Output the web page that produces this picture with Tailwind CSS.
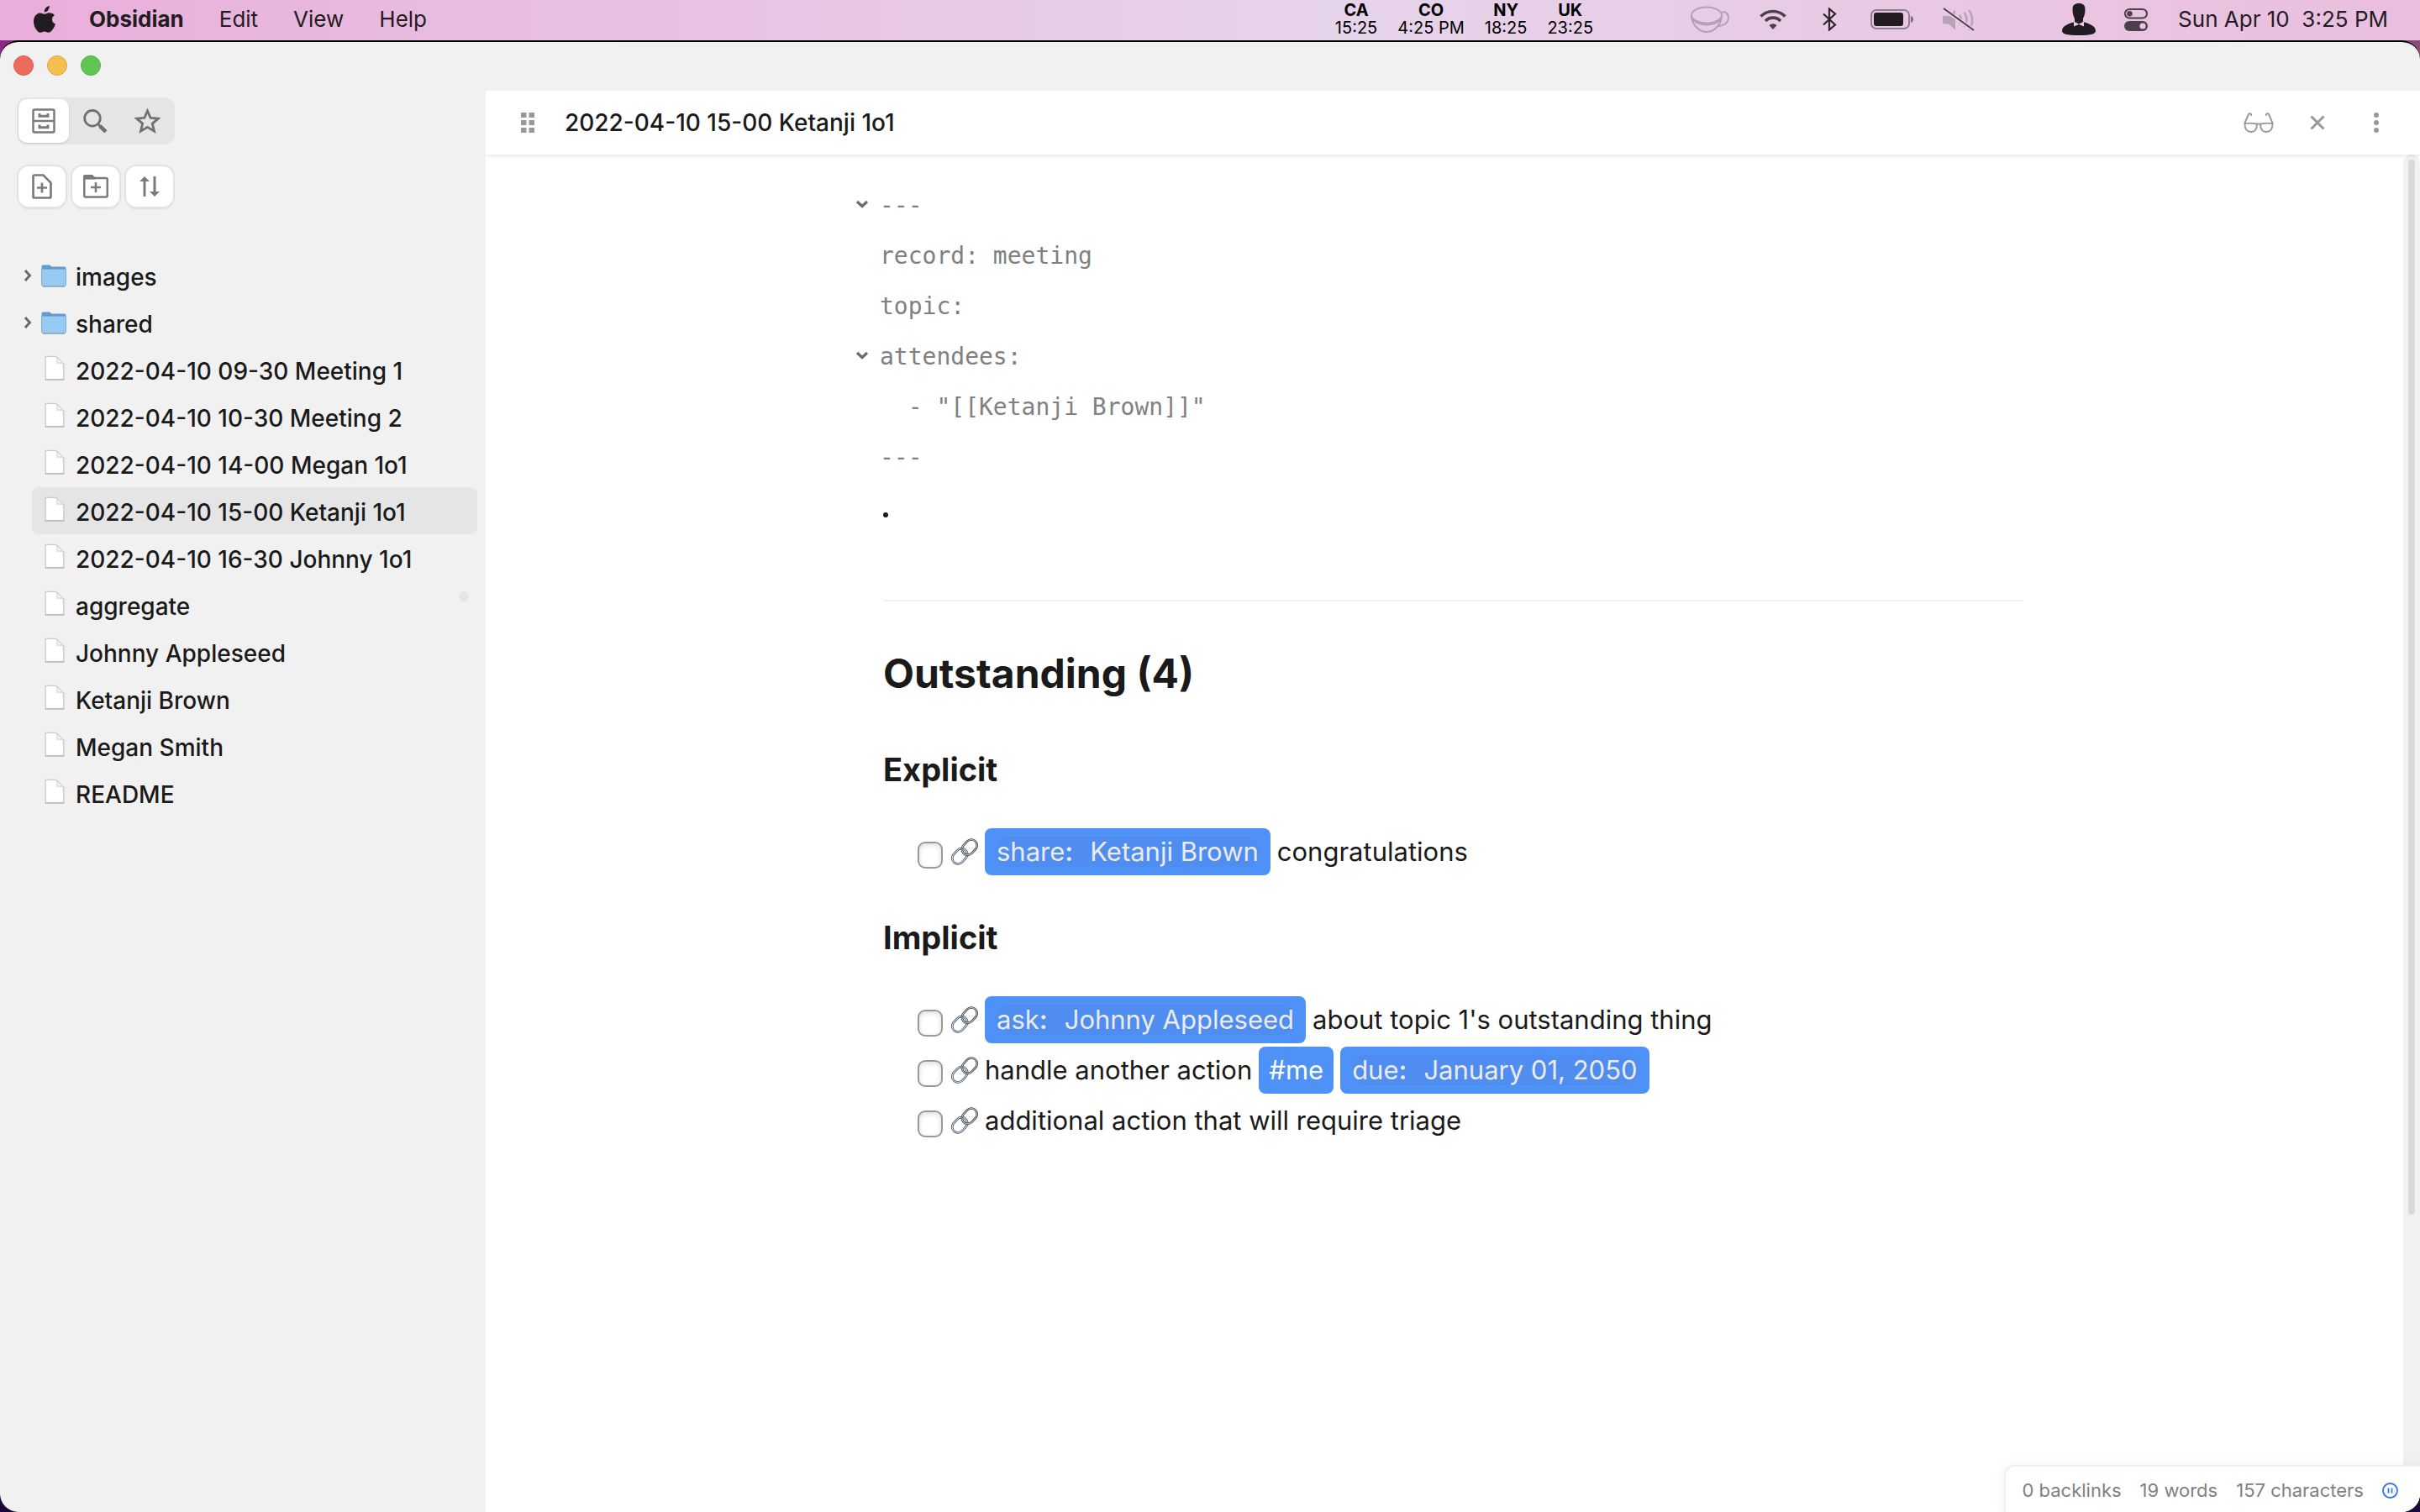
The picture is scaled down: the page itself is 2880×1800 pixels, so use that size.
<!DOCTYPE html>
<html lang="en">
<head>
<meta charset="utf-8">
<meta name="viewport" content="width=device-width, initial-scale=1">
<title>2022-04-10 15-00 Ketanji 1o1 - Obsidian</title>
<script src="https://cdn.jsdelivr.net/npm/@tailwindcss/browser@4"></script>
</head>
<body class="flex h-screen flex-col overflow-hidden bg-linear-to-r from-[#8a2a84] to-[#8c4a78] font-['Inter',sans-serif] text-[#1a1a1a]">

<!-- Shared symbols -->
<svg class="hidden" aria-hidden="true">
  <symbol id="i-file" viewBox="0 0 26 32">
    <path d="M1.500 1.500h13.500l9.500 9.500v19.500h-23z" fill="#fff" stroke="#c9c9c9" stroke-width="1.500"/>
    <path d="M15 1.500c1.500 3 1 5.500 0.500 8.500 3-0.500 6-0.500 9 1z" fill="#f1f1f1" stroke="#d0d0d0" stroke-width="1"/>
    <path d="M1 30.800h24" stroke="#b3b3b3" stroke-width="1.500"/>
  </symbol>
  <symbol id="i-folder" viewBox="0 0 30 27">
    <path d="M0.500 2.500a2 2 0 0 1 2-2h7.500l2.500 2h15a2 2 0 0 1 2 2v19a2 2 0 0 1-2 2h-25a2 2 0 0 1-2-2z" fill="#5f9ad3"/>
    <path d="M0.500 5.500h29v18a2 2 0 0 1-2 2h-25a2 2 0 0 1-2-2z" fill="#98cbf2" stroke="#7fb0da" stroke-width="1"/>
    <path d="M2 26h26" stroke="#8fa3b3" stroke-width="1.500"/>
  </symbol>
  <symbol id="i-chevron" viewBox="0 0 10 16">
    <path d="M2 2l5.500 6-5.500 6" fill="none" stroke="#6b6b6b" stroke-width="3"/>
  </symbol>
  <symbol id="i-fold" viewBox="0 0 16 12">
    <path d="M2 3l6 5.500 6-5.500" fill="none" stroke="#6b6b6b" stroke-width="3.200"/>
  </symbol>
  <symbol id="i-link" viewBox="0 0 32 32">
    <g fill="none">
      <rect x="-10" y="-6.800" width="20" height="13.600" rx="6.800" transform="translate(10.200 21.300) rotate(-47)" stroke="#454a54" stroke-width="2.600"/>
      <rect x="-10" y="-6.800" width="20" height="13.600" rx="6.800" transform="translate(10.200 21.300) rotate(-47)" stroke="#c3d8ea" stroke-width="1.200"/>
      <rect x="-10" y="-6.800" width="20" height="13.600" rx="6.800" transform="translate(21.800 10.700) rotate(-47)" stroke="#4a4146" stroke-width="2.600"/>
      <rect x="-10" y="-6.800" width="20" height="13.600" rx="6.800" transform="translate(21.800 10.700) rotate(-47)" stroke="#bccbdc" stroke-width="1"/>
    </g>
  </symbol>
</svg>

<!-- Menu bar -->
<header class="flex h-12 shrink-0 items-center bg-linear-to-r from-[#e9aeda] via-[#e6d4ea] via-55% to-[#eabede] pb-0.5 pl-10 pr-[38px] text-[26px] leading-8 text-[#221c22]">
  <button aria-label="Apple menu" class="mr-10">
    <svg class="h-8 w-[26px]" viewBox="0 0 26 32" fill="#221c22"><path d="M18.800 0c.2 2-.6 3.900-1.700 5.200-1.200 1.400-2.800 2.300-4.300 2.200-.2-1.900.7-3.900 1.800-5.100C15.700 1 17.400.1 18.800 0zM25 10.900c-1.800 1.100-3 2.800-3 5.200 0 2.800 1.600 4.800 4 5.700-.6 1.800-1.500 3.600-2.600 5.200-1.600 2.300-3.200 4.600-5.600 4.700-2 0-2.800-1.300-4.900-1.300s-3 1.300-4.900 1.300c-2.200.1-3.800-2-5.300-4.300C-.4 23-.7 16.400 1.300 12.700c1.400-2.600 3.900-4.300 6.500-4.300 2.200 0 3.600 1.300 5.300 1.300 1.600 0 2.900-1.400 5.600-1.400 2.300 0 4.700 1 6.300 2.600z"/></svg>
  </button>
  <nav class="flex items-center gap-[42px]" aria-label="Application menu">
    <button class="font-bold">Obsidian</button>
    <button>Edit</button>
    <button>View</button>
    <button>Help</button>
  </nav>
  <div class="ml-auto flex items-center gap-6 text-center text-xl leading-[21px] text-black">
    <div><div class="font-bold">CA</div><div>15:25</div></div>
    <div><div class="font-bold">CO</div><div>4:25 PM</div></div>
    <div><div class="font-bold">NY</div><div>18:25</div></div>
    <div><div class="font-bold">UK</div><div>23:25</div></div>
  </div>
  <div class="ml-29 flex items-center">
    <svg class="h-8 w-[46px]" viewBox="0 0 46 32" fill="none" stroke="#b3a0b5" stroke-width="2"><ellipse cx="19" cy="11" rx="18" ry="9.500"/><path d="M1 11c0 10 8 20 18 20s18-10 18-20M36 8c5-2 9 1 9 6 0 6-6 10-12 10M2 15c3 5 9 7.500 17 7.500S33 20 36 15"/></svg>
    <svg class="ml-9 h-6 w-8" viewBox="0 0 32 24" fill="none" stroke="#4a3f4a" stroke-width="3.600"><path d="M1.500 8.500a20.500 20.500 0 0 1 29 0"/><path d="M7 14a12.500 12.500 0 0 1 18 0"/><path d="M16 24l-4.500-4.800a6.300 6.300 0 0 1 9 0z" fill="#4a3f4a" stroke="none"/></svg>
    <svg class="ml-[43px] h-7 w-[17px]" viewBox="0 0 17 28" fill="none" stroke="#2b252b" stroke-width="2.200"><path d="M1 7.500l14 13-7 6v-25l7 6-14 13"/></svg>
    <svg class="ml-10 h-6 w-[52px]" viewBox="0 0 52 24"><rect x="1" y="1" width="45" height="22" rx="6" fill="none" stroke="#8f7f91" stroke-width="2"/><rect x="4" y="4" width="35" height="16" rx="3" fill="#221c22"/><path d="M48 8c4 1 4 7 0 8z" fill="#7b6d7d"/></svg>
    <svg class="ml-[34px] h-7 w-[38px]" viewBox="0 0 38 28" fill="none"><path d="M0 10h7l8-7.500v24l-8-7H1.500a1.500 1.500 0 0 1-1.500-1.500z" fill="#b7a2b9"/><path d="M20 9c2 3 2 7 0 10M25.500 6c4 5 4 12 0 17M31 3c5.500 7 5.500 17 0 24" stroke="#b7a2b9" stroke-width="2.500"/><path d="M0 1l37 26" stroke="#e8cfe6" stroke-width="5"/><path d="M1 1l36 26" stroke="#4a3f4a" stroke-width="2"/></svg>
    <svg class="ml-26 h-[38px] w-10" viewBox="0 0 40 38" fill="#221c22"><path d="M12.500 7C12.500 2 15 0 20 0s7.500 2 7.500 7c0 5-1 8-2.500 11v4c6 2 15 4 15 11 0 3-5 5-20 5S0 36 0 33c0-7 9-9 15-11v-4c-1.500-3-2.500-6-2.500-11z"/><path d="M14 21.500l6 3 6-3v6l-6-2.500-6 2.500z" fill="#ecc9e3"/></svg>
    <svg class="ml-[34px] h-[27px] w-7" viewBox="0 0 28 27"><rect x="1" y="1" width="26" height="10.500" rx="5.200" fill="none" stroke="#4a3f4a" stroke-width="2"/><circle cx="6.500" cy="6.200" r="3.200" fill="#4a3f4a"/><rect y="15" width="28" height="12" rx="6" fill="#4a3f4a"/><circle cx="22" cy="21" r="3.600" fill="#ecc6e2"/></svg>
    <time class="ml-9 whitespace-pre" datetime="2022-04-10T15:25">Sun Apr 10  3:25 PM</time>
  </div>
</header>

<!-- App window -->
<div class="min-h-0 flex-1 bg-linear-to-b from-transparent from-50% to-[#1a0838] to-50%">
<div class="relative flex h-full overflow-hidden rounded-[22px] border-t-2 border-black bg-[#f1f1f1]">

  <!-- Sidebar -->
  <aside class="flex w-[578px] shrink-0 flex-col">
    <div class="flex gap-4 pl-4 pt-4">
      <button aria-label="Close window" class="size-6 rounded-full border border-[#dd5a4e] bg-[#ed6a5e]"></button>
      <button aria-label="Minimize window" class="size-6 rounded-full border border-[#dfa340] bg-[#f5bf4f]"></button>
      <button aria-label="Zoom window" class="size-6 rounded-full border border-[#52ab41] bg-[#61c554]"></button>
    </div>

    <div class="ml-5 mt-[26px] flex w-[188px] rounded-xl bg-[#e5e5e5] p-0.5 text-[#707070]">
      <button aria-label="File explorer" class="flex h-[52px] w-15 items-center justify-center rounded-[10px] bg-white text-[#7b7b7b] shadow-sm">
        <svg class="h-[30px] w-7" viewBox="0 0 28 30" fill="none" stroke="currentColor" stroke-width="2.500"><rect x="1.500" y="1.500" width="25" height="27" rx="1.500"/><path d="M1.500 15h25"/><path d="M9 6v3.200h10V6M9 19.500v3.200h10v-3.200" stroke-width="3"/></svg>
      </button>
      <button aria-label="Search" class="flex h-[52px] w-[62px] items-center justify-center">
        <svg class="h-7 w-[29px]" viewBox="0 0 29 28" fill="none" stroke="currentColor" stroke-width="2.800"><circle cx="11" cy="10.800" r="9.300"/><path d="M17.500 17.500l3 3"/><path d="M19.800 20l7.200 6.800" stroke-width="4.500"/></svg>
      </button>
      <button aria-label="Starred" class="flex h-[52px] w-[62px] items-center justify-center">
        <svg class="size-[31px]" viewBox="0 0 31 31" fill="none" stroke="currentColor" stroke-width="2.800"><path d="M15.500 3l3.600 8.300 9.200.8-7 6 2.200 9-8-4.800-8 4.800 2.200-9-7-6 9.200-.8z"/></svg>
      </button>
    </div>

    <div class="ml-[22px] mt-[26px] flex gap-2 text-[#7b7b7b]">
      <button aria-label="New note" class="flex h-12 w-14 items-center justify-center rounded-xl bg-white shadow-[0_0_0_2px_#e2e2e2,0_3px_2px_#dcdcdc]">
        <svg class="h-[30px] w-6" viewBox="0 0 24 30" fill="none" stroke="currentColor" stroke-width="2.700"><path d="M3 1.500h10.500l9 9V27a1.500 1.500 0 0 1-1.500 1.500H3A1.500 1.500 0 0 1 1.500 27V3A1.500 1.500 0 0 1 3 1.500zM12 10.500v12M6 16.500h12"/></svg>
      </button>
      <button aria-label="New folder" class="flex h-12 w-14 items-center justify-center rounded-xl bg-white shadow-[0_0_0_2px_#e2e2e2,0_3px_2px_#dcdcdc]">
        <svg class="h-7 w-[30px]" viewBox="0 0 30 28" fill="none" stroke="currentColor" stroke-width="2.500"><path d="M1.300 4h26a1.500 1.500 0 0 1 1.500 1.500v19.500a1.500 1.500 0 0 1-1.500 1.500h-24.500A1.500 1.500 0 0 1 1.300 25z"/><path d="M0 4V2a2 2 0 0 1 2-2h9l4 4v1.500H1z" fill="currentColor" stroke="none"/><path d="M15 9v12M9 15h12"/></svg>
      </button>
      <button aria-label="Change sort order" class="flex h-12 w-14 items-center justify-center rounded-xl bg-white shadow-[0_0_0_2px_#e2e2e2,0_3px_2px_#dcdcdc]">
        <svg class="size-6" viewBox="0 0 24 24"><path d="M6 4v20M18 0v20" stroke="currentColor" stroke-width="3"/><path d="M0 6l6-6 6 6zM12 18l6 6 6-6z" fill="currentColor"/></svg>
      </button>
    </div>

    <ul class="mt-[54px] pl-5 pr-2.5 text-[28px] font-medium leading-[52px]">
      <li class="flex items-center">
        <svg class="ml-2 h-4 w-2.5"><use href="#i-chevron"/></svg>
        <button class="flex h-14 flex-1 items-center gap-[11px] rounded-lg pl-[11px]"><svg class="h-[27px] w-[30px]"><use href="#i-folder"/></svg><span class="pt-1">images</span></button>
      </li>
      <li class="flex items-center">
        <svg class="ml-2 h-4 w-2.5"><use href="#i-chevron"/></svg>
        <button class="flex h-14 flex-1 items-center gap-[11px] rounded-lg pl-[11px]"><svg class="h-[27px] w-[30px]"><use href="#i-folder"/></svg><span class="pt-1">shared</span></button>
      </li>
      <li class="pl-[18px]"><a href="#" class="flex h-14 items-center gap-2.5 rounded-lg pl-3"><svg class="mb-1 h-[30px] w-[30px]"><use href="#i-file"/></svg><span class="pt-1">2022-04-10 09-30 Meeting 1</span></a></li>
      <li class="pl-[18px]"><a href="#" class="flex h-14 items-center gap-2.5 rounded-lg pl-3"><svg class="mb-1 h-[30px] w-[30px]"><use href="#i-file"/></svg><span class="pt-1">2022-04-10 10-30 Meeting 2</span></a></li>
      <li class="pl-[18px]"><a href="#" class="flex h-14 items-center gap-2.5 rounded-lg pl-3"><svg class="mb-1 h-[30px] w-[30px]"><use href="#i-file"/></svg><span class="pt-1">2022-04-10 14-00 Megan 1o1</span></a></li>
      <li class="pl-[18px]"><a href="#" aria-current="page" class="flex h-14 items-center gap-2.5 rounded-lg bg-[#e5e5e5] pl-3"><svg class="mb-1 h-[30px] w-[30px]"><use href="#i-file"/></svg><span class="pt-1">2022-04-10 15-00 Ketanji 1o1</span></a></li>
      <li class="pl-[18px]"><a href="#" class="flex h-14 items-center gap-2.5 rounded-lg pl-3"><svg class="mb-1 h-[30px] w-[30px]"><use href="#i-file"/></svg><span class="pt-1">2022-04-10 16-30 Johnny 1o1</span></a></li>
      <li class="pl-[18px]"><a href="#" class="flex h-14 items-center gap-2.5 rounded-lg pl-3 pr-2.5"><svg class="mb-1 h-[30px] w-[30px]"><use href="#i-file"/></svg><span class="pt-1">aggregate</span><span class="ml-auto mt-3 size-3 self-start rounded-full bg-[#e5e5e5]"></span></a></li>
      <li class="pl-[18px]"><a href="#" class="flex h-14 items-center gap-2.5 rounded-lg pl-3"><svg class="mb-1 h-[30px] w-[30px]"><use href="#i-file"/></svg><span class="pt-1">Johnny Appleseed</span></a></li>
      <li class="pl-[18px]"><a href="#" class="flex h-14 items-center gap-2.5 rounded-lg pl-3"><svg class="mb-1 h-[30px] w-[30px]"><use href="#i-file"/></svg><span class="pt-1">Ketanji Brown</span></a></li>
      <li class="pl-[18px]"><a href="#" class="flex h-14 items-center gap-2.5 rounded-lg pl-3"><svg class="mb-1 h-[30px] w-[30px]"><use href="#i-file"/></svg><span class="pt-1">Megan Smith</span></a></li>
      <li class="pl-[18px]"><a href="#" class="flex h-14 items-center gap-2.5 rounded-lg pl-3"><svg class="mb-1 h-[30px] w-[30px]"><use href="#i-file"/></svg><span class="pt-1">README</span></a></li>
    </ul>
  </aside>

  <!-- Note pane -->
  <main class="mt-14 flex min-w-0 flex-1 flex-col overflow-hidden border-t-2 border-[#f1f1f1] bg-white">
    <div class="z-10 flex h-19 shrink-0 items-center bg-white pl-[15px] pr-[17px] text-[#999999] shadow-[0_1px_5px_rgba(0,0,0,0.13)]">
      <button aria-label="Drag pane" class="flex w-[70px] justify-center">
        <svg class="h-6 w-4" viewBox="0 0 16 24" fill="currentColor"><path d="M0 0h6.500v6H0zM9.500 0H16v6H9.500zM0 9h6.500v6H0zM9.500 9H16v6H9.500zM0 18h6.500v6H0zM9.500 18H16v6H9.500z"/></svg>
      </button>
      <h1 class="ml-[9px] text-[28px] font-medium leading-9 text-[#1a1a1a]">2022-04-10 15-00 Ketanji 1o1</h1>
      <button aria-label="Toggle reading view" class="ml-auto flex w-[70px] justify-center">
        <svg class="h-6 w-9" viewBox="0 0 36 24" fill="none" stroke="currentColor" stroke-width="1.900"><path d="M9.500 4c-.5-3-2.500-4-3.500-2L1 13.500M26.500 4c.5-3 2.500-4 3.500-2L35 13.500M0.500 13.500c5-1.500 10-1 15 0h5c5-1 10-1.500 15 0M1.500 13.500c0 6 2 9.500 7.500 9.500s7-4 7-9.500M34.500 13.500c0 6-2 9.500-7.500 9.500s-7-4-7-9.500"/></svg>
      </button>
      <button aria-label="Close pane" class="flex w-[70px] justify-center">
        <svg class="size-[18px]" viewBox="0 0 18 18"><path d="M1.500 1.500l15 15M16.500 1.500l-15 15" stroke="currentColor" stroke-width="3"/></svg>
      </button>
      <button aria-label="More options" class="flex w-[70px] justify-center">
        <svg class="h-6 w-2" viewBox="0 0 8 24" fill="currentColor"><circle cx="4" cy="3" r="3"/><circle cx="4" cy="12" r="3"/><circle cx="4" cy="21" r="3"/></svg>
      </button>
    </div>

    <div class="flex min-h-0 flex-1">
      <div class="min-w-0 flex-1 pl-5 pt-[31px]">
        <div class="mx-auto max-w-[1364px]">
          <div class="font-['DejaVu_Sans_Mono',monospace] text-[28px] leading-[60px] text-[#808080]">
            <div class="relative"><button aria-label="Fold front matter" class="absolute -left-[29px] top-0 flex h-14 items-center"><svg class="h-3 w-4"><use href="#i-fold"/></svg></button>---</div>
            <div>record: meeting</div>
            <div>topic:</div>
            <div class="relative"><button aria-label="Fold attendees" class="absolute -left-[29px] top-0 flex h-14 items-center"><svg class="h-3 w-4"><use href="#i-fold"/></svg></button>attendees:</div>
            <div class="whitespace-pre">  - "[[Ketanji Brown]]"</div>
            <div>---</div>
          </div>

          <div class="pl-1 pr-[3px]">
            <div class="mt-[35px]"><span class="block size-1.5 rounded-full bg-[#1a1a1a]"></span></div>
            <hr class="mt-[98px] border-t-2 border-[#f1f1f1]">

            <h2 class="mt-[54px] text-5xl font-bold leading-16">Outstanding (4)</h2>

            <h3 class="mt-[58px] text-[38px] font-bold leading-12">Explicit</h3>
            <ul class="mt-11 pl-[41px] text-[31px] leading-[60px]">
              <li class="flex h-15 items-center">
                <input id="t1" type="checkbox" class="mt-2 h-8 w-[30px] appearance-none rounded-[9px] border-2 border-[#999999] bg-white shadow-[inset_0_2px_6px_#dddddd]">
                <a href="#" aria-label="Open source of task" class="ml-2.5 mr-2"><svg class="size-8"><use href="#i-link"/></svg></a>
                <label for="t1" class="flex items-center gap-2 whitespace-nowrap"><span class="rounded-lg bg-[#4f92f7] px-3.5 py-2.5 leading-9 text-[#ebebeb]"><span class="flex gap-5 rounded-2xl bg-[#4f8df0]"><span>share<b class="font-semibold">:</b></span><span>Ketanji Brown</span></span></span><span>congratulations</span></label>
              </li>
            </ul>

            <h3 class="mt-12 text-[38px] font-bold leading-12">Implicit</h3>
            <ul class="mt-11 pl-[41px] text-[31px] leading-[60px]">
              <li class="flex h-15 items-center">
                <input id="t2" type="checkbox" class="mt-2 h-8 w-[30px] appearance-none rounded-[9px] border-2 border-[#999999] bg-white shadow-[inset_0_2px_6px_#dddddd]">
                <a href="#" aria-label="Open source of task" class="ml-2.5 mr-2"><svg class="size-8"><use href="#i-link"/></svg></a>
                <label for="t2" class="flex items-center gap-2 whitespace-nowrap"><span class="rounded-lg bg-[#4f92f7] px-3.5 py-2.5 leading-9 text-[#ebebeb]"><span class="flex gap-5 rounded-2xl bg-[#4f8df0]"><span>ask<b class="font-semibold">:</b></span><span>Johnny Appleseed</span></span></span><span>about topic 1's outstanding thing</span></label>
              </li>
              <li class="flex h-15 items-center">
                <input id="t3" type="checkbox" class="mt-2 h-8 w-[30px] appearance-none rounded-[9px] border-2 border-[#999999] bg-white shadow-[inset_0_2px_6px_#dddddd]">
                <a href="#" aria-label="Open source of task" class="ml-2.5 mr-2"><svg class="size-8"><use href="#i-link"/></svg></a>
                <label for="t3" class="flex items-center gap-2 whitespace-nowrap"><span>handle another action</span><a href="#" class="rounded-lg bg-[#4f92f7] px-3 py-2.5 leading-9 text-white">#me</a><span class="rounded-lg bg-[#4f92f7] px-3.5 py-2.5 leading-9 text-[#ebebeb]"><span class="flex gap-5 rounded-2xl bg-[#4f8df0]"><span>due<b class="font-semibold">:</b></span><span>January 01, 2050</span></span></span></label>
              </li>
              <li class="flex h-15 items-center">
                <input id="t4" type="checkbox" class="mt-2 h-8 w-[30px] appearance-none rounded-[9px] border-2 border-[#999999] bg-white shadow-[inset_0_2px_6px_#dddddd]">
                <a href="#" aria-label="Open source of task" class="ml-2.5 mr-2"><svg class="size-8"><use href="#i-link"/></svg></a>
                <label for="t4">additional action that will require triage</label>
              </li>
            </ul>
          </div>
        </div>
      </div>
      <!-- Scroll track -->
      <div class="flex w-5 shrink-0 justify-center rounded-t-[10px] bg-[#f1f1f1] pt-1.5"><div class="h-[78%] w-2 rounded-full bg-[#d9d9d9]"></div></div>
    </div>
  </main>

  <!-- Status bar floats over the note -->
  <footer class="absolute bottom-0 right-0 z-20 flex h-14 items-center gap-[22px] rounded-tl-xl border-l-2 border-t-2 border-[#f0f0f0] bg-white pl-5 pr-[26px] pt-0.5 text-[22px] leading-7 text-[#808080] shadow-[0_0_16px_rgba(0,0,0,0.06)]">
    <span>0 backlinks</span>
    <span>19 words</span>
    <span>157 characters</span>
    <button aria-label="Sync paused"><svg class="size-[19px]" viewBox="0 0 19 19" fill="none" stroke="#2f74f5" stroke-width="1.800"><circle cx="9.500" cy="9.500" r="8.500"/><path d="M7.500 6.500v6M11.500 6.500v6"/></svg></button>
  </footer>
</div>
</div>
</body>
</html>
